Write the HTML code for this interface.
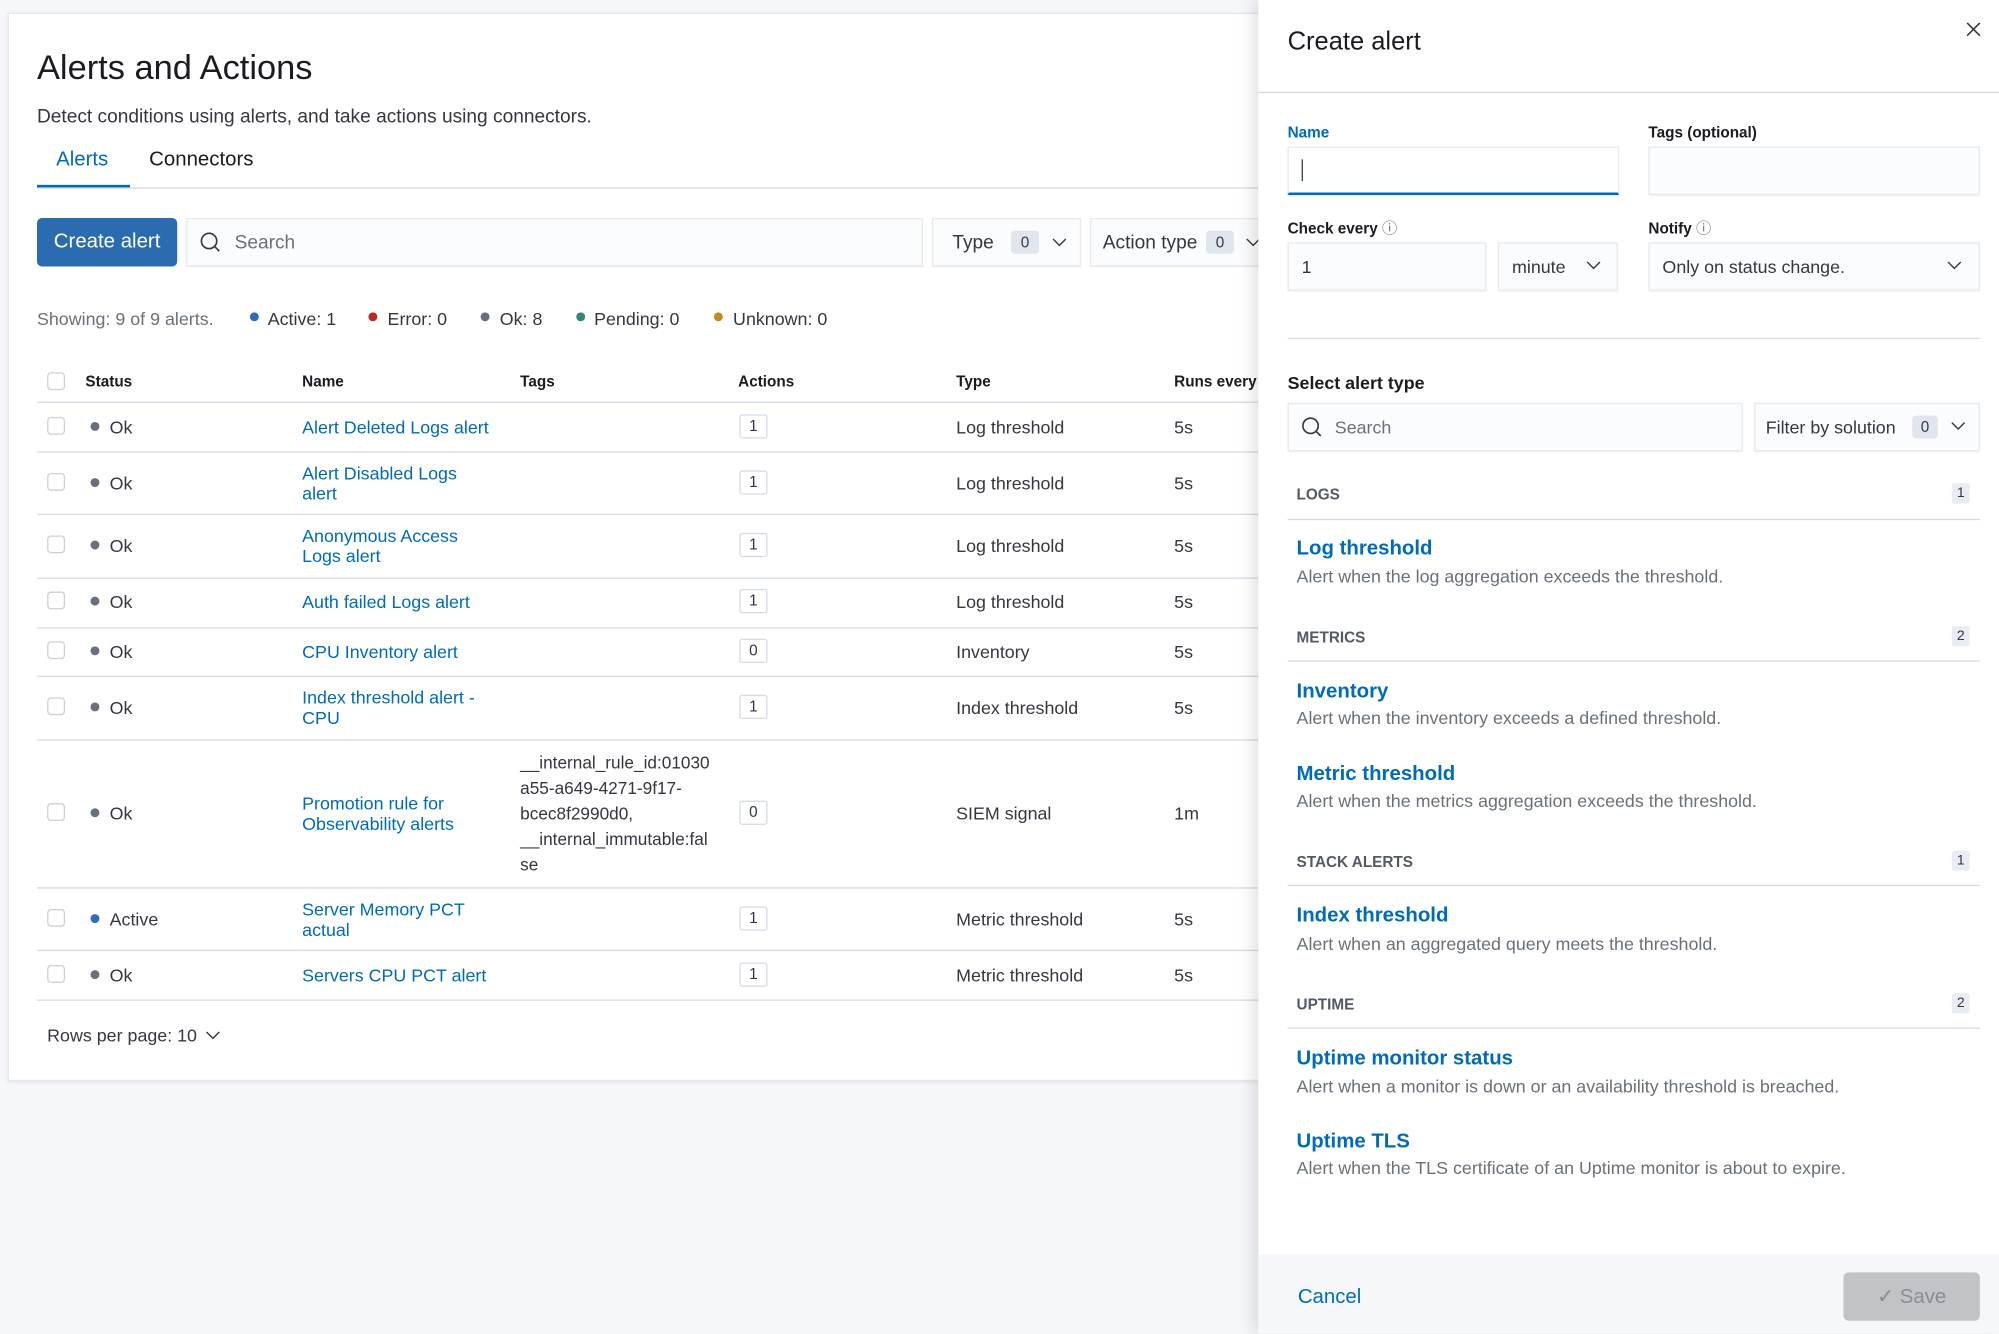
<!DOCTYPE html>
<html><head><meta charset="utf-8"><style>
html,body{margin:0;padding:0;width:1999px;height:1333px;overflow:hidden;background:#f5f7fa;}
#w{position:absolute;left:0;top:0;width:1568px;height:1046px;transform:scale(1.27487);transform-origin:0 0;font-family:"Liberation Sans",sans-serif;color:#343741;}
.a{position:absolute;white-space:nowrap;}
.lnk{color:#006bb8;}
.hl{position:absolute;height:1px;background:#d3dae6;}
.cb{position:absolute;width:12px;height:12px;border:1px solid #c9d0da;border-radius:3px;background:#fff;}
.dot{position:absolute;width:7px;height:7px;border-radius:50%;}
.badge{position:absolute;border:1px solid #d3dae6;border-radius:2px;width:20px;height:17px;font-size:12px;text-align:center;line-height:17px;background:#fff;}
.inp{position:absolute;background:#fbfcfd;border:1px solid #e6e9ef;box-shadow:0 1px 1px rgba(0,0,0,.05);}
.nb{position:absolute;background:#e0e5ee;border-radius:3px;font-size:12px;text-align:center;}
.lab{font-size:12px;font-weight:bold;color:#1a1c21;}
.sec{font-size:12px;font-weight:bold;color:#535966;}
.t{font-size:16px;font-weight:bold;color:#006bb8;}
.d{font-size:14px;color:#69707d;}
.cnt{position:absolute;width:14px;height:16px;background:#e9edf3;border-radius:2px;font-size:11px;text-align:center;line-height:16px;}
.chev{position:absolute;}
</style></head><body><div id="w">
<div style="position:absolute;left:6px;top:10px;width:990px;height:836px;background:#fff;border:1px solid #e3e7ed;box-shadow:0 1px 3px rgba(0,0,0,.08)"></div>
<div class="a" style="left:29px;top:38px;font-size:27px;color:#1a1c21">Alerts and Actions</div>
<div class="a" style="left:29px;top:83px;font-size:15px">Detect conditions using alerts, and take actions using connectors.</div>
<div class="a lnk" style="left:44px;top:117px;font-size:16px">Alerts</div>
<div class="a" style="left:117px;top:117px;font-size:16px;color:#1a1c21">Connectors</div>
<div class="hl" style="left:29px;top:147px;width:960px"></div>
<div style="position:absolute;left:29px;top:145px;width:73px;height:2px;background:#006bb8"></div>
<div style="position:absolute;left:29px;top:171px;width:110px;height:38px;background:#2b6bb0;border-radius:4px;color:#fff;font-size:16px;text-align:center;line-height:38px">Create alert</div>
<div class="inp" style="left:146px;top:171px;width:576px;height:36px"></div>
<svg class="a" style="left:156px;top:181px" width="18" height="18"><circle cx="8" cy="8" r="6" fill="none" stroke="#343741" stroke-width="1.3"/><line x1="12.5" y1="12.5" x2="16" y2="16" stroke="#343741" stroke-width="1.3"/></svg>
<div class="a" style="left:184px;top:182px;font-size:15px;color:#69707d">Search</div>
<div class="inp" style="left:731px;top:171px;width:115px;height:36px"></div>
<div class="a" style="left:747px;top:182px;font-size:15px">Type</div>
<div class="nb" style="left:793px;top:181px;width:22px;height:18px;line-height:18px">0</div>
<svg class="chev" style="left:825px;top:186px" width="12" height="8"><path d="M1 1.5L6 6.5L11 1.5" fill="none" stroke="#343741" stroke-width="1.1"/></svg>
<div class="inp" style="left:855px;top:171px;width:140px;height:36px"></div>
<div class="a" style="left:865px;top:182px;font-size:15px">Action type</div>
<div class="nb" style="left:946px;top:181px;width:22px;height:18px;line-height:18px">0</div>
<svg class="chev" style="left:977px;top:186px" width="12" height="8"><path d="M1 1.5L6 6.5L11 1.5" fill="none" stroke="#343741" stroke-width="1.1"/></svg>
<div class="a" style="left:29px;top:242px;font-size:14px;color:#69707d">Showing: 9 of 9 alerts.</div>
<div class="dot" style="left:196px;top:245px;background:#2f6bb8"></div><div class="a" style="left:210px;top:242px;font-size:14px">Active: 1</div>
<div class="dot" style="left:289px;top:245px;background:#bd271e"></div><div class="a" style="left:304px;top:242px;font-size:14px">Error: 0</div>
<div class="dot" style="left:377px;top:245px;background:#69707d"></div><div class="a" style="left:392px;top:242px;font-size:14px">Ok: 8</div>
<div class="dot" style="left:452px;top:245px;background:#34857a"></div><div class="a" style="left:466px;top:242px;font-size:14px">Pending: 0</div>
<div class="dot" style="left:560px;top:245px;background:#c28a24"></div><div class="a" style="left:575px;top:242px;font-size:14px">Unknown: 0</div>
<div class="cb" style="left:37px;top:292px"></div>
<div class="a" style="left:67px;top:292px;font-size:12px;font-weight:bold;color:#1a1c21">Status</div>
<div class="a" style="left:237px;top:292px;font-size:12px;font-weight:bold;color:#1a1c21">Name</div>
<div class="a" style="left:408px;top:292px;font-size:12px;font-weight:bold;color:#1a1c21">Tags</div>
<div class="a" style="left:579px;top:292px;font-size:12px;font-weight:bold;color:#1a1c21">Actions</div>
<div class="a" style="left:750px;top:292px;font-size:12px;font-weight:bold;color:#1a1c21">Type</div>
<div class="a" style="left:921px;top:292px;font-size:12px;font-weight:bold;color:#1a1c21">Runs every</div>
<div class="hl" style="left:29px;top:315px;width:960px"></div>
<div class="hl" style="left:29px;top:354px;width:960px"></div>
<div class="hl" style="left:29px;top:403px;width:960px"></div>
<div class="hl" style="left:29px;top:453px;width:960px"></div>
<div class="hl" style="left:29px;top:492px;width:960px"></div>
<div class="hl" style="left:29px;top:530px;width:960px"></div>
<div class="hl" style="left:29px;top:580px;width:960px"></div>
<div class="hl" style="left:29px;top:696px;width:960px"></div>
<div class="hl" style="left:29px;top:745px;width:960px"></div>
<div class="hl" style="left:29px;top:784px;width:960px"></div>
<div style="font-size:14px">
<div class="cb" style="left:37px;top:327px"></div><div class="dot" style="left:71px;top:331px;background:#69707d"></div><div class="a" style="left:86px;top:327px">Ok</div><div class="a lnk" style="left:237px;top:327px">Alert Deleted Logs alert</div><div class="badge" style="left:580px;top:325px">1</div><div class="a" style="left:750px;top:327px">Log threshold</div><div class="a" style="left:921px;top:327px">5s</div>

<div class="cb" style="left:37px;top:371px"></div><div class="dot" style="left:71px;top:375px;background:#69707d"></div><div class="a" style="left:86px;top:371px">Ok</div><div class="a lnk" style="left:237px;top:363px;line-height:16px">Alert Disabled Logs<br>alert</div><div class="badge" style="left:580px;top:369px">1</div><div class="a" style="left:750px;top:371px">Log threshold</div><div class="a" style="left:921px;top:371px">5s</div>

<div class="cb" style="left:37px;top:420px"></div><div class="dot" style="left:71px;top:424px;background:#69707d"></div><div class="a" style="left:86px;top:420px">Ok</div><div class="a lnk" style="left:237px;top:412px;line-height:16px">Anonymous Access<br>Logs alert</div><div class="badge" style="left:580px;top:418px">1</div><div class="a" style="left:750px;top:420px">Log threshold</div><div class="a" style="left:921px;top:420px">5s</div>

<div class="cb" style="left:37px;top:464px"></div><div class="dot" style="left:71px;top:468px;background:#69707d"></div><div class="a" style="left:86px;top:464px">Ok</div><div class="a lnk" style="left:237px;top:464px">Auth failed Logs alert</div><div class="badge" style="left:580px;top:462px">1</div><div class="a" style="left:750px;top:464px">Log threshold</div><div class="a" style="left:921px;top:464px">5s</div>

<div class="cb" style="left:37px;top:503px"></div><div class="dot" style="left:71px;top:507px;background:#69707d"></div><div class="a" style="left:86px;top:503px">Ok</div><div class="a lnk" style="left:237px;top:503px">CPU Inventory alert</div><div class="badge" style="left:580px;top:501px">0</div><div class="a" style="left:750px;top:503px">Inventory</div><div class="a" style="left:921px;top:503px">5s</div>

<div class="cb" style="left:37px;top:547px"></div><div class="dot" style="left:71px;top:551px;background:#69707d"></div><div class="a" style="left:86px;top:547px">Ok</div><div class="a lnk" style="left:237px;top:539px;line-height:16px">Index threshold alert -<br>CPU</div><div class="badge" style="left:580px;top:545px">1</div><div class="a" style="left:750px;top:547px">Index threshold</div><div class="a" style="left:921px;top:547px">5s</div>

<div class="cb" style="left:37px;top:630px"></div><div class="dot" style="left:71px;top:634px;background:#69707d"></div><div class="a" style="left:86px;top:630px">Ok</div><div class="a lnk" style="left:237px;top:622px;line-height:16px">Promotion rule for<br>Observability alerts</div><div class="a" style="left:408px;top:589px;line-height:20px;font-size:13.5px">__internal_rule_id:01030<br>a55-a649-4271-9f17-<br>bcec8f2990d0,<br>__internal_immutable:fal<br>se</div><div class="badge" style="left:580px;top:628px">0</div><div class="a" style="left:750px;top:630px">SIEM signal</div><div class="a" style="left:921px;top:630px">1m</div>

<div class="cb" style="left:37px;top:713px"></div><div class="dot" style="left:71px;top:717px;background:#2f6bb8"></div><div class="a" style="left:86px;top:713px">Active</div><div class="a lnk" style="left:237px;top:705px;line-height:16px">Server Memory PCT<br>actual</div><div class="badge" style="left:580px;top:711px">1</div><div class="a" style="left:750px;top:713px">Metric threshold</div><div class="a" style="left:921px;top:713px">5s</div>

<div class="cb" style="left:37px;top:757px"></div><div class="dot" style="left:71px;top:761px;background:#69707d"></div><div class="a" style="left:86px;top:757px">Ok</div><div class="a lnk" style="left:237px;top:757px">Servers CPU PCT alert</div><div class="badge" style="left:580px;top:755px">1</div><div class="a" style="left:750px;top:757px">Metric threshold</div><div class="a" style="left:921px;top:757px">5s</div>
</div>
<div class="a" style="left:37px;top:804px;font-size:14px">Rows per page: 10</div>
<svg class="chev" style="left:161px;top:808px" width="12" height="8"><path d="M1 1.5L6 6.5L11 1.5" fill="none" stroke="#343741" stroke-width="1.1"/></svg>

<div style="position:absolute;left:987px;top:0;width:581px;height:1046px;background:#fff;box-shadow:-4px 0 12px rgba(0,0,0,.12)"></div>
<div class="a" style="left:1010px;top:22px;font-size:20px;color:#1a1c21">Create alert</div>
<svg class="a" style="left:1542px;top:17px" width="12" height="12"><path d="M1 1L11 11M11 1L1 11" stroke="#343741" stroke-width="1.2"/></svg>
<div class="hl" style="left:987px;top:72px;width:581px"></div>
<div class="a lab" style="left:1010px;top:97px;color:#006bb8">Name</div>
<div class="a lab" style="left:1293px;top:97px">Tags (optional)</div>
<div class="inp" style="left:1010px;top:115px;width:258px;height:35px;border-bottom:2px solid #006bb8;background:#fff"></div>
<div style="position:absolute;left:1021px;top:125px;width:1px;height:17px;background:#343741"></div>
<div class="inp" style="left:1293px;top:115px;width:258px;height:36px"></div>
<div class="a lab" style="left:1010px;top:170px">Check every <span style="font-weight:normal;color:#69707d">&#9432;</span></div>
<div class="a lab" style="left:1293px;top:170px">Notify <span style="font-weight:normal;color:#69707d">&#9432;</span></div>
<div class="inp" style="left:1010px;top:190px;width:154px;height:36px"></div>
<div class="a" style="left:1021px;top:201px;font-size:14px">1</div>
<div class="inp" style="left:1175px;top:190px;width:92px;height:36px"></div>
<div class="a" style="left:1186px;top:201px;font-size:14px">minute</div>
<svg class="chev" style="left:1244px;top:204px" width="12" height="8"><path d="M1 1.5L6 6.5L11 1.5" fill="none" stroke="#343741" stroke-width="1.1"/></svg>
<div class="inp" style="left:1293px;top:190px;width:258px;height:36px"></div>
<div class="a" style="left:1304px;top:201px;font-size:14px">Only on status change.</div>
<svg class="chev" style="left:1527px;top:204px" width="12" height="8"><path d="M1 1.5L6 6.5L11 1.5" fill="none" stroke="#343741" stroke-width="1.1"/></svg>
<div class="hl" style="left:1010px;top:265px;width:543px"></div>
<div class="a" style="left:1010px;top:292px;font-size:14px;font-weight:bold;color:#1a1c21">Select alert type</div>
<div class="inp" style="left:1010px;top:316px;width:355px;height:36px"></div>
<svg class="a" style="left:1020px;top:326px" width="18" height="18"><circle cx="8" cy="8" r="6" fill="none" stroke="#343741" stroke-width="1.3"/><line x1="12.5" y1="12.5" x2="16" y2="16" stroke="#343741" stroke-width="1.3"/></svg>
<div class="a" style="left:1047px;top:327px;font-size:14px;color:#69707d">Search</div>
<div class="inp" style="left:1376px;top:316px;width:175px;height:36px"></div>
<div class="a" style="left:1385px;top:327px;font-size:14px">Filter by solution</div>
<div class="nb" style="left:1500px;top:326px;width:20px;height:18px;line-height:18px">0</div>
<svg class="chev" style="left:1530px;top:330px" width="12" height="8"><path d="M1 1.5L6 6.5L11 1.5" fill="none" stroke="#343741" stroke-width="1.1"/></svg>

<div class="a sec" style="left:1017px;top:381px">LOGS</div><div class="cnt" style="left:1531px;top:379px">1</div>
<div class="hl" style="left:1010px;top:407px;width:543px"></div>
<div class="a t" style="left:1017px;top:422px">Log threshold</div>
<div class="a d" style="left:1017px;top:444px">Alert when the log aggregation exceeds the threshold.</div>
<div class="a sec" style="left:1017px;top:493px">METRICS</div><div class="cnt" style="left:1531px;top:491px">2</div>
<div class="hl" style="left:1010px;top:518px;width:543px"></div>
<div class="a t" style="left:1017px;top:534px">Inventory</div>
<div class="a d" style="left:1017px;top:555px">Alert when the inventory exceeds a defined threshold.</div>
<div class="a t" style="left:1017px;top:599px">Metric threshold</div>
<div class="a d" style="left:1017px;top:620px">Alert when the metrics aggregation exceeds the threshold.</div>
<div class="a sec" style="left:1017px;top:669px">STACK ALERTS</div><div class="cnt" style="left:1531px;top:667px">1</div>
<div class="hl" style="left:1010px;top:694px;width:543px"></div>
<div class="a t" style="left:1017px;top:710px">Index threshold</div>
<div class="a d" style="left:1017px;top:732px">Alert when an aggregated query meets the threshold.</div>
<div class="a sec" style="left:1017px;top:781px">UPTIME</div><div class="cnt" style="left:1531px;top:779px">2</div>
<div class="hl" style="left:1010px;top:806px;width:543px"></div>
<div class="a t" style="left:1017px;top:822px">Uptime monitor status</div>
<div class="a d" style="left:1017px;top:844px">Alert when a monitor is down or an availability threshold is breached.</div>
<div class="a t" style="left:1017px;top:887px">Uptime TLS</div>
<div class="a d" style="left:1017px;top:908px">Alert when the TLS certificate of an Uptime monitor is about to expire.</div>

<div style="position:absolute;left:987px;top:984px;width:581px;height:62px;background:#f5f7fa"></div>
<div class="a lnk" style="left:1018px;top:1009px;font-size:16px">Cancel</div>
<div style="position:absolute;left:1446px;top:998px;width:107px;height:38px;background:#c2c3c6;border-radius:4px;color:#8a8d92;font-size:16px;text-align:center;line-height:40px">&#10003; Save</div>
</div></body></html>
